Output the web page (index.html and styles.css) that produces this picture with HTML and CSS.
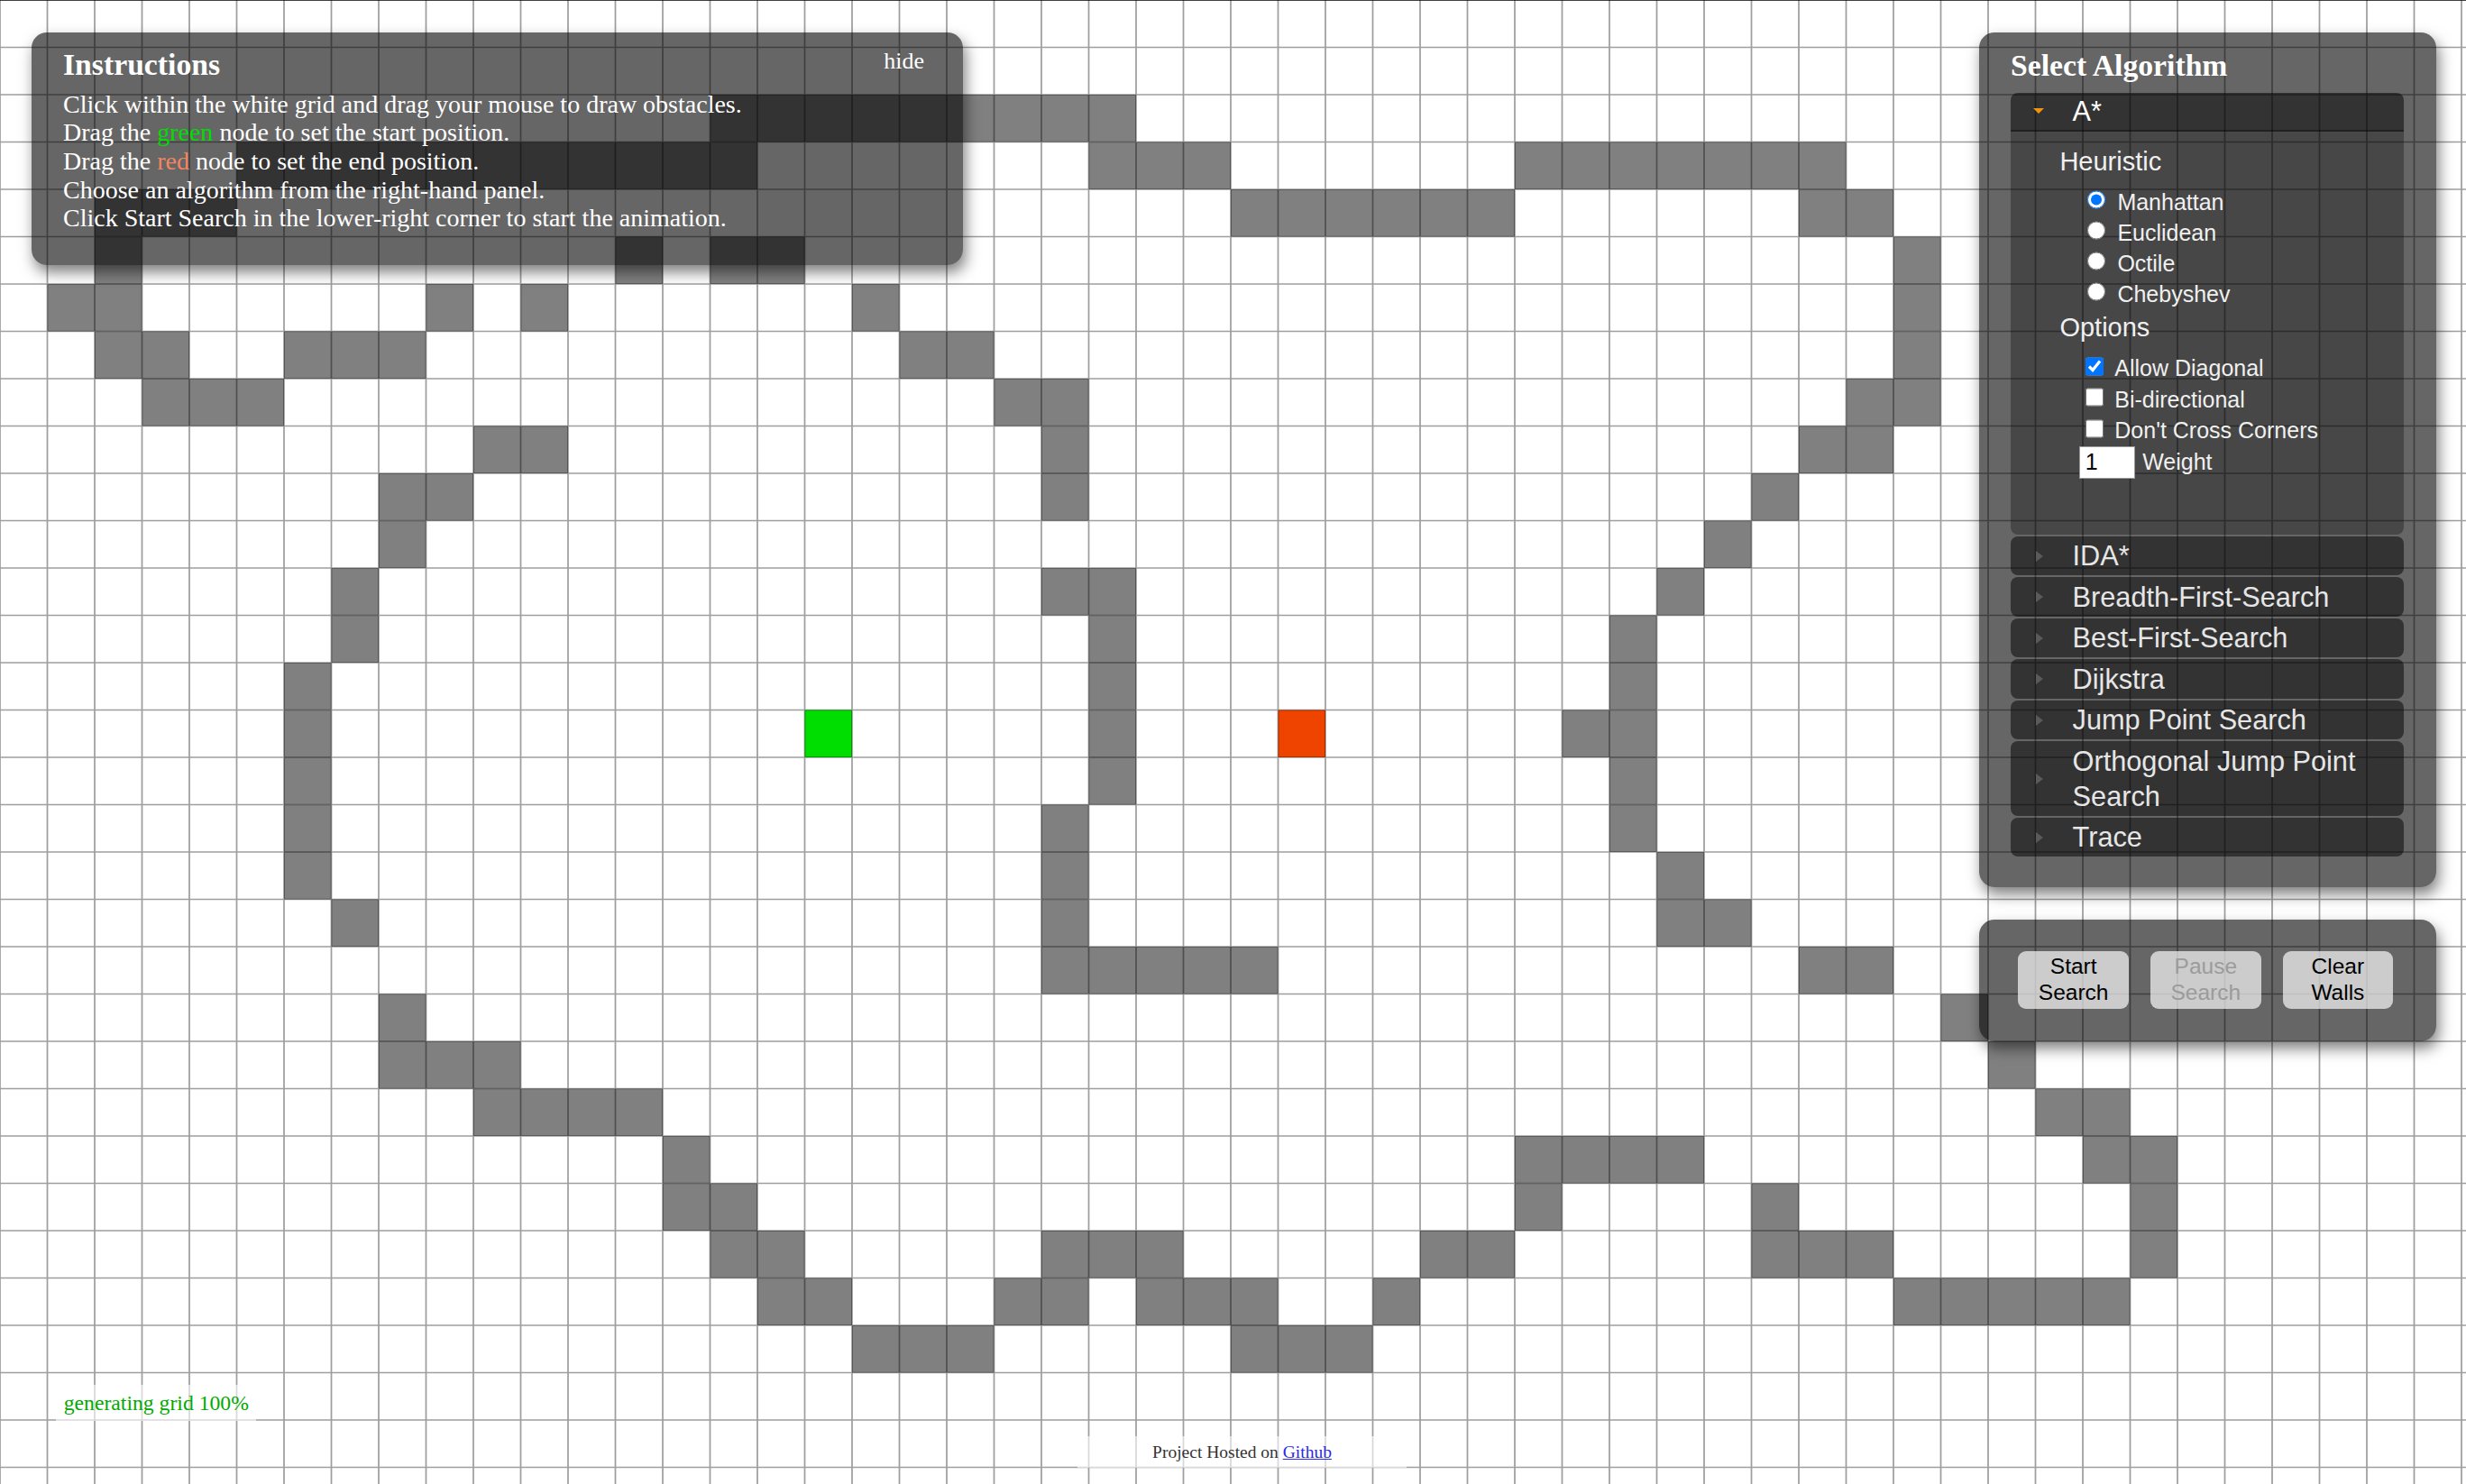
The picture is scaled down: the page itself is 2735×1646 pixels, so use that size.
FILE: index.html
```html
<!DOCTYPE html>
<html lang="en">
<head>
<meta charset="utf-8">
<title>PathFinding.js</title>
<link rel="stylesheet" href="styles.css">
</head>
<body>
<svg class="grid" viewBox="0 0 52.0952 31.3524" preserveAspectRatio="none" xmlns="http://www.w3.org/2000/svg">
  <g class="walls">
    <rect x="15" y="2" width="9" height="1"/>
    <rect x="5" y="3" width="11" height="1"/><rect x="23" y="3" width="3" height="1"/><rect x="32" y="3" width="7" height="1"/>
    <rect x="2" y="4" width="3" height="1"/><rect x="26" y="4" width="6" height="1"/><rect x="38" y="4" width="2" height="1"/>
    <rect x="2" y="5" width="1" height="1"/><rect x="13" y="5" width="1" height="1"/><rect x="15" y="5" width="2" height="1"/><rect x="40" y="5" width="1" height="1"/>
    <rect x="1" y="6" width="2" height="1"/><rect x="9" y="6" width="1" height="1"/><rect x="11" y="6" width="1" height="1"/><rect x="18" y="6" width="1" height="1"/><rect x="40" y="6" width="1" height="1"/>
    <rect x="2" y="7" width="2" height="1"/><rect x="6" y="7" width="3" height="1"/><rect x="19" y="7" width="2" height="1"/><rect x="40" y="7" width="1" height="1"/>
    <rect x="3" y="8" width="3" height="1"/><rect x="21" y="8" width="2" height="1"/><rect x="39" y="8" width="2" height="1"/>
    <rect x="10" y="9" width="2" height="1"/><rect x="22" y="9" width="1" height="1"/><rect x="38" y="9" width="2" height="1"/>
    <rect x="8" y="10" width="2" height="1"/><rect x="22" y="10" width="1" height="1"/><rect x="37" y="10" width="1" height="1"/>
    <rect x="8" y="11" width="1" height="1"/><rect x="36" y="11" width="1" height="1"/>
    <rect x="7" y="12" width="1" height="1"/><rect x="22" y="12" width="2" height="1"/><rect x="35" y="12" width="1" height="1"/>
    <rect x="7" y="13" width="1" height="1"/><rect x="23" y="13" width="1" height="1"/><rect x="34" y="13" width="1" height="1"/>
    <rect x="6" y="14" width="1" height="1"/><rect x="23" y="14" width="1" height="1"/><rect x="34" y="14" width="1" height="1"/>
    <rect x="6" y="15" width="1" height="1"/><rect x="23" y="15" width="1" height="1"/><rect x="33" y="15" width="2" height="1"/>
    <rect x="6" y="16" width="1" height="1"/><rect x="23" y="16" width="1" height="1"/><rect x="34" y="16" width="1" height="1"/>
    <rect x="6" y="17" width="1" height="1"/><rect x="22" y="17" width="1" height="1"/><rect x="34" y="17" width="1" height="1"/>
    <rect x="6" y="18" width="1" height="1"/><rect x="22" y="18" width="1" height="1"/><rect x="35" y="18" width="1" height="1"/>
    <rect x="7" y="19" width="1" height="1"/><rect x="22" y="19" width="1" height="1"/><rect x="35" y="19" width="2" height="1"/>
    <rect x="22" y="20" width="5" height="1"/><rect x="38" y="20" width="2" height="1"/>
    <rect x="8" y="21" width="1" height="1"/><rect x="41" y="21" width="1" height="1"/>
    <rect x="8" y="22" width="3" height="1"/><rect x="42" y="22" width="1" height="1"/>
    <rect x="10" y="23" width="4" height="1"/><rect x="43" y="23" width="2" height="1"/>
    <rect x="14" y="24" width="1" height="1"/><rect x="32" y="24" width="4" height="1"/><rect x="44" y="24" width="2" height="1"/>
    <rect x="14" y="25" width="2" height="1"/><rect x="32" y="25" width="1" height="1"/><rect x="37" y="25" width="1" height="1"/><rect x="45" y="25" width="1" height="1"/>
    <rect x="15" y="26" width="2" height="1"/><rect x="22" y="26" width="3" height="1"/><rect x="30" y="26" width="2" height="1"/><rect x="37" y="26" width="3" height="1"/><rect x="45" y="26" width="1" height="1"/>
    <rect x="16" y="27" width="2" height="1"/><rect x="21" y="27" width="2" height="1"/><rect x="24" y="27" width="3" height="1"/><rect x="29" y="27" width="1" height="1"/><rect x="40" y="27" width="5" height="1"/>
    <rect x="18" y="28" width="3" height="1"/><rect x="26" y="28" width="3" height="1"/>
  </g>
  <rect class="node-start" x="17" y="15" width="1" height="1"/>
  <rect class="node-end" x="27" y="15" width="1" height="1"/>
  <path class="lines" d="M0 0V32M1 0V32M2 0V32M3 0V32M4 0V32M5 0V32M6 0V32M7 0V32M8 0V32M9 0V32M10 0V32M11 0V32M12 0V32M13 0V32M14 0V32M15 0V32M16 0V32M17 0V32M18 0V32M19 0V32M20 0V32M21 0V32M22 0V32M23 0V32M24 0V32M25 0V32M26 0V32M27 0V32M28 0V32M29 0V32M30 0V32M31 0V32M32 0V32M33 0V32M34 0V32M35 0V32M36 0V32M37 0V32M38 0V32M39 0V32M40 0V32M41 0V32M42 0V32M43 0V32M44 0V32M45 0V32M46 0V32M47 0V32M48 0V32M49 0V32M50 0V32M51 0V32M52 0V32M0 1H53M0 2H53M0 3H53M0 4H53M0 5H53M0 6H53M0 7H53M0 8H53M0 9H53M0 10H53M0 11H53M0 12H53M0 13H53M0 14H53M0 15H53M0 16H53M0 17H53M0 18H53M0 19H53M0 20H53M0 21H53M0 22H53M0 23H53M0 24H53M0 25H53M0 26H53M0 27H53M0 28H53M0 29H53M0 30H53M0 31H53"/>
  <path class="topline" d="M0 0H53"/>
</svg>

<div class="panel instructions">
  <header class="instr-head">
    <h3 class="panel-title">Instructions</h3>
    <span class="hide">hide</span>
  </header>
  <ul class="instr-list">
    <li>Click within the white grid and drag your mouse to draw obstacles.</li>
    <li>Drag the <span class="c-green">green</span> node to set the start position.</li>
    <li>Drag the <span class="c-red">red</span> node to set the end position.</li>
    <li>Choose an algorithm from the right-hand panel.</li>
    <li>Click Start Search in the lower-right corner to start the animation.</li>
  </ul>
</div>

<div class="panel algorithms">
  <h3 class="panel-title algo-title">Select Algorithm</h3>
  <div class="accordion">
    <div class="acc-head active"><span class="acc-icon"><span class="tri-down"></span></span><span class="acc-label">A*</span></div>
    <div class="acc-body">
      <div class="opt-title">Heuristic</div>
      <div class="opt-group">
        <label class="opt-row"><input class="radio" type="radio" name="heur" checked><span>Manhattan</span></label>
        <label class="opt-row"><input class="radio" type="radio" name="heur"><span>Euclidean</span></label>
        <label class="opt-row"><input class="radio" type="radio" name="heur"><span>Octile</span></label>
        <label class="opt-row"><input class="radio" type="radio" name="heur"><span>Chebyshev</span></label>
      </div>
      <div class="opt-title opt-title-2">Options</div>
      <div class="opt-group checks">
        <label class="opt-row check-row"><input class="check" type="checkbox" checked><span>Allow Diagonal</span></label>
        <label class="opt-row check-row"><input class="check" type="checkbox"><span>Bi-directional</span></label>
        <label class="opt-row check-row"><input class="check" type="checkbox"><span>Don't Cross Corners</span></label>
      </div>
      <div class="weight-row"><input class="weight" type="text" value="1"><span>Weight</span></div>
    </div>
    <div class="acc-head"><span class="acc-icon"><span class="tri-right"></span></span><span class="acc-label">IDA*</span></div>
    <div class="acc-head"><span class="acc-icon"><span class="tri-right"></span></span><span class="acc-label">Breadth-First-Search</span></div>
    <div class="acc-head"><span class="acc-icon"><span class="tri-right"></span></span><span class="acc-label">Best-First-Search</span></div>
    <div class="acc-head"><span class="acc-icon"><span class="tri-right"></span></span><span class="acc-label">Dijkstra</span></div>
    <div class="acc-head"><span class="acc-icon"><span class="tri-right"></span></span><span class="acc-label">Jump Point Search</span></div>
    <div class="acc-head"><span class="acc-icon"><span class="tri-right"></span></span><span class="acc-label">Orthogonal Jump Point Search</span></div>
    <div class="acc-head"><span class="acc-icon"><span class="tri-right"></span></span><span class="acc-label">Trace</span></div>
  </div>
</div>

<div class="panel play">
  <button class="ctl">Start<br>Search</button>
  <button class="ctl" disabled>Pause<br>Search</button>
  <button class="ctl">Clear<br>Walls</button>
</div>

<div class="status">generating grid 100%</div>
<div class="footer">Project Hosted on <a class="gh" href="#">Github</a></div>
</body>
</html>
```

FILE: styles.css
```css
html, body {
  margin: 0;
  padding: 0;
}
body {
  position: relative;
  width: 2735px;
  height: 1646px;
  overflow: hidden;
  background: #fff;
  font-family: "Liberation Serif", "Times New Roman", serif;
}

/* ---------- grid canvas ---------- */
.grid {
  position: absolute;
  left: 0;
  top: 0;
  width: 2735px;
  height: 1646px;
  display: block;
}
.walls rect { fill: #808080; }
.node-start { fill: #00dd00; }
.node-end { fill: #ee4400; }
.lines {
  fill: none;
  stroke: #000;
  stroke-opacity: 0.38;
  stroke-width: 0.0333;
}
.topline {
  fill: none;
  stroke: #000;
  stroke-opacity: 0.75;
  stroke-width: 0.04;
}

/* ---------- panels ---------- */
.panel {
  position: absolute;
  box-sizing: border-box;
  background: rgba(0, 0, 0, 0.6);
  color: #fff;
  border-radius: 17px;
  box-shadow: 3px 8px 16px rgba(0, 0, 0, 0.5);
}
.panel-title {
  margin: 0;
  font-size: 33.7px;
  line-height: 38px;
  font-weight: bold;
}

/* instructions */
.instructions {
  left: 35px;
  top: 36px;
  width: 1033px;
  height: 258px;
  padding: 17px 43px 0 35px;
}
.instr-head {
  display: flex;
  justify-content: space-between;
  align-items: flex-start;
}
.hide {
  font-size: 26px;
  line-height: 30px;
}
.instr-list {
  list-style: none;
  margin: 8.6px 0 0;
  padding: 0;
  font-size: 28px;
  line-height: 31.7px;
}
.c-green { color: #00dd00; }
.c-red { color: #f4845f; }

/* algorithm panel */
.algorithms {
  left: 2195px;
  top: 35.5px;
  width: 507px;
  height: 948.5px;
  padding: 18.75px 36px 0 35px;
}
.algo-title { margin-bottom: 10.25px; }
.accordion {
  font-family: "Liberation Sans", Arial, sans-serif;
}
.acc-head {
  display: flex;
  align-items: center;
  margin-top: 2px;
  padding: 2.5px 0 2px;
  background: rgba(0, 0, 0, 0.5);
  border-radius: 8px;
  color: #e6e6e6;
  font-size: 30.7px;
  line-height: 39px;
}
.acc-head.active {
  margin-top: 0;
  padding: 1px 0;
  border-radius: 8px 8px 0 0;
  border-bottom: 2px solid rgba(0, 0, 0, 0.35);
  color: #fff;
}
.acc-icon {
  flex: none;
  width: 43.6px;
  margin-left: 25px;
  display: flex;
  align-items: center;
}
.tri-down {
  width: 0;
  height: 0;
  border-left: 6.5px solid transparent;
  border-right: 6.5px solid transparent;
  border-top: 6px solid #f0960e;
}
.tri-right {
  margin-left: 2.6px;
  width: 0;
  height: 0;
  border-top: 6px solid transparent;
  border-bottom: 6px solid transparent;
  border-left: 8px solid #5a5a5a;
}
.acc-label {
  flex: 1;
  padding-right: 6px;
}
.acc-body {
  background: rgba(0, 0, 0, 0.3);
  border-radius: 0 0 8px 8px;
  padding: 16px 0 62px;
  color: #f0f0f0;
}
.opt-title {
  font-size: 29px;
  line-height: 34px;
  padding-left: 54.4px;
}
.opt-title-2 { margin-top: 2.9px; }
.opt-group { margin-top: 11.7px; }
.opt-group.checks { margin-top: 11.2px; }
.opt-row {
  display: flex;
  align-items: center;
  height: 34px;
  padding-left: 84.7px;
  font-size: 25px;
}
.check-row {
  height: 34.5px;
  padding-left: 82.6px;
}
.radio {
  width: 20.4px;
  height: 20.4px;
  margin: 0 13.3px 5px 0;
}
.check {
  width: 20.7px;
  height: 20.7px;
  margin: 0 12px 4.6px 0;
}
.weight-row {
  display: flex;
  align-items: center;
  padding-left: 75.8px;
  font-size: 25px;
}
.weight {
  box-sizing: border-box;
  width: 62px;
  height: 36px;
  margin: 0 8.4px 0 0;
  padding: 0 6px;
  border: 1px solid #999;
  background: #fff;
  color: #000;
  font-family: "Liberation Sans", Arial, sans-serif;
  font-size: 25px;
}

/* play panel */
.play {
  left: 2195px;
  top: 1020px;
  width: 507px;
  height: 135px;
  padding: 35px 0 0 43.4px;
  display: flex;
  align-items: flex-start;
  gap: 24px;
}
.ctl {
  box-sizing: border-box;
  width: 122.6px;
  height: 64.3px;
  padding: 3px 0 4px;
  border: 0;
  border-radius: 9px;
  background: rgba(255, 255, 255, 0.67);
  color: #000;
  font-family: "Liberation Sans", Arial, sans-serif;
  font-size: 24.5px;
  line-height: 28.3px;
}
.ctl:disabled { color: #9b9b9b; }

/* overlays at bottom */
.status {
  position: absolute;
  left: 62px;
  top: 1536px;
  height: 40px;
  padding: 0 8px 0 8.7px;
  line-height: 40px;
  font-size: 23.7px;
  color: #00aa00;
  background: rgba(255, 255, 255, 0.6);
}
.footer {
  position: absolute;
  left: 1195px;
  top: 1593px;
  width: 365px;
  height: 35px;
  line-height: 35px;
  text-align: center;
  font-size: 19.5px;
  color: #333;
  background: rgba(255, 255, 255, 0.6);
}
.gh { color: #2a2ae8; }
```
